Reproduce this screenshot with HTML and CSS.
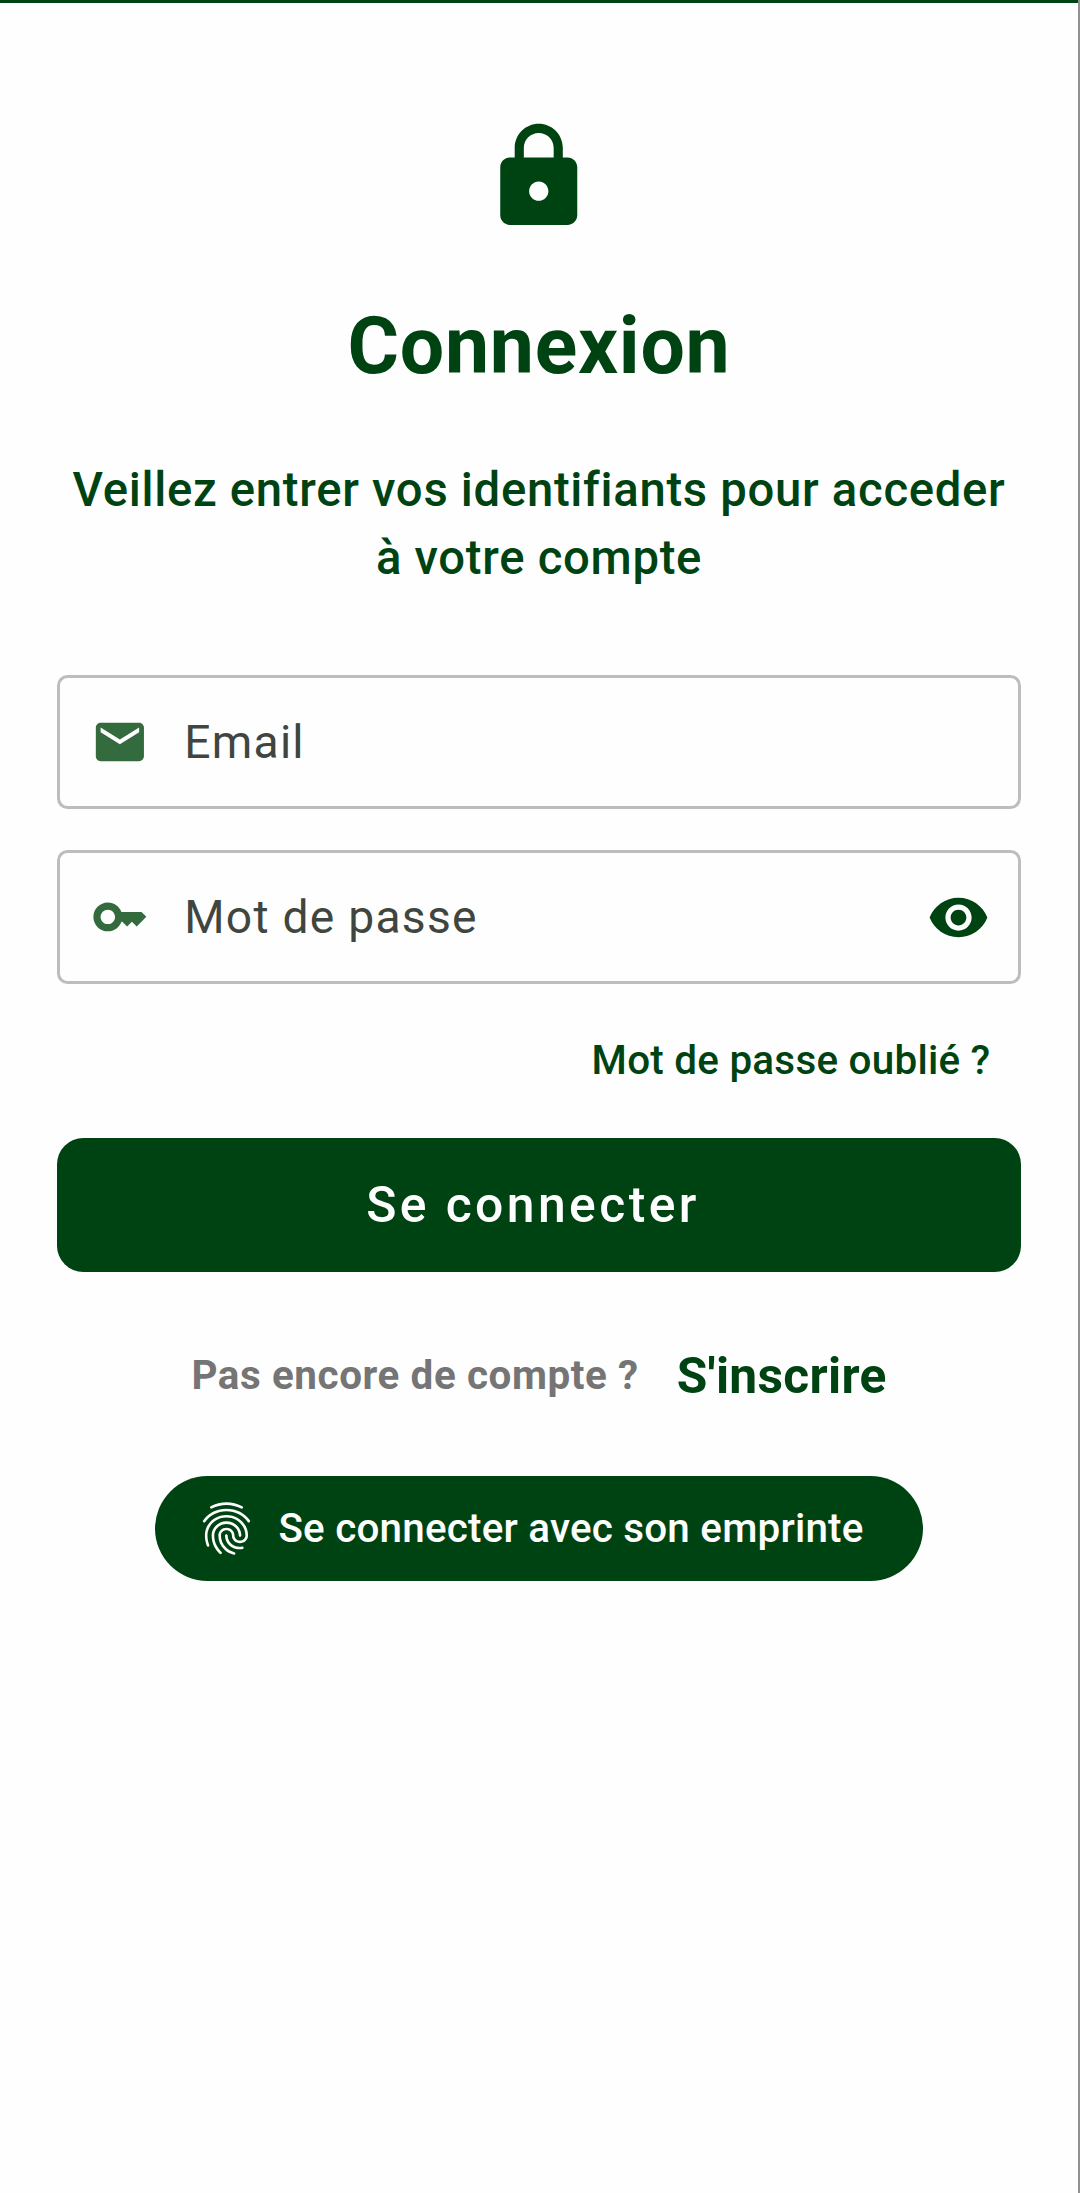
FILE: index.html
```html
<!DOCTYPE html>
<html lang="fr">
<head>
  <meta charset="UTF-8">
  <meta name="viewport" content="width=device-width, initial-scale=1.0">
  <title>Connexion</title>
  <link rel="stylesheet" href="styles.css">
</head>
<body>
  <div class="container">
    <svg class="lock-icon" viewBox="0 0 24 24">
      <path d="M18 8h-1V6c0-2.76-2.24-5-5-5S7 3.24 7 6v2H6c-1.1 0-2 .9-2 2v10c0 1.1.9 2 2 2h12c1.1 0 2-.9 2-2V10c0-1.1-.9-2-2-2zm-6 9c-1.1 0-2-.9-2-2s.9-2 2-2 2 .9 2 2-.9 2-2 2zm3.1-9H8.9V6c0-1.71 1.39-3.1 3.1-3.1 1.71 0 3.1 1.39 3.1 3.1v2z"/>
    </svg>
    <h1>Connexion</h1>
    <p class="subtitle">Veillez entrer vos identifiants pour acceder à votre compte</p>

    <form class="login-form">
      <div class="input-group">
        <svg class="field-icon" viewBox="0 0 24 24">
          <path d="M20 4H4c-1.1 0-1.99.9-1.99 2L2 18c0 1.1.9 2 2 2h16c1.1 0 2-.9 2-2V6c0-1.1-.9-2-2-2zm0 4l-8 5-8-5V6l8 5 8-5v2z"/>
        </svg>
        <input type="email" id="email" placeholder="Email">
      </div>
      <div class="input-group">
        <svg class="field-icon" viewBox="0 0 24 24">
          <path d="M21 10h-8.35C11.83 7.67 9.61 6 7 6c-3.31 0-6 2.69-6 6s2.69 6 6 6c2.61 0 4.83-1.67 5.65-4H13l2 2 2-2 2 2 4-4.04L21 10zM7 15c-1.65 0-3-1.35-3-3s1.35-3 3-3 3 1.35 3 3-1.35 3-3 3z"/>
        </svg>
        <input type="password" id="password" placeholder="Mot de passe">
        <svg class="eye-icon" viewBox="0 0 24 24">
          <path d="M12 4.5C7 4.5 2.73 7.61 1 12c1.73 4.39 6 7.5 11 7.5s9.27-3.11 11-7.5c-1.73-4.39-6-7.5-11-7.5zM12 17c-2.76 0-5-2.24-5-5s2.24-5 5-5 5 2.24 5 5-2.24 5-5 5zm0-8c-1.66 0-3 1.34-3 3s1.34 3 3 3 3-1.34 3-3-1.34-3-3-3z"/>
        </svg>
      </div>
      <a class="forgot">Mot de passe oublié ?</a>
      <button type="button" class="btn">Se connecter</button>
    </form>

    <div class="signup">
      <span class="signup-text">Pas encore de compte ?</span>
      <a class="signup-link">S'inscrire</a>
    </div>

    <button type="button" class="btn-fingerprint">
      <svg class="fingerprint-icon" viewBox="0 0 24 24">
        <path d="M17.81 4.47c-.08 0-.16-.02-.23-.06C15.66 3.42 14 3 12.01 3c-1.98 0-3.86.47-5.57 1.41-.24.13-.54.04-.68-.2-.13-.24-.04-.55.2-.68C7.82 2.52 9.86 2 12.01 2c2.13 0 3.99.47 6.03 1.52.25.13.34.43.21.67-.09.18-.26.28-.44.28zM3.5 9.72c-.1 0-.2-.03-.29-.09-.23-.16-.28-.47-.12-.7.99-1.4 2.25-2.5 3.75-3.27C9.98 4.04 14 4.03 17.15 5.65c1.5.77 2.76 1.86 3.75 3.25.16.22.11.54-.12.7-.23.16-.54.11-.7-.12-.9-1.26-2.04-2.25-3.39-2.94-2.87-1.47-6.54-1.47-9.4.01-1.36.7-2.5 1.7-3.4 2.96-.08.14-.23.21-.39.21zm6.25 12.07c-.13 0-.26-.05-.35-.15-.87-.87-1.34-1.43-2.01-2.64-.69-1.23-1.05-2.73-1.05-4.34 0-2.97 2.54-5.39 5.66-5.39s5.66 2.42 5.66 5.39c0 .28-.22.5-.5.5s-.5-.22-.5-.5c0-2.42-2.09-4.39-4.66-4.39-2.57 0-4.66 1.97-4.66 4.39 0 1.44.32 2.77.93 3.85.64 1.15 1.08 1.64 1.85 2.42.19.2.19.51 0 .71-.11.1-.24.15-.37.15zm7.17-1.85c-1.19 0-2.24-.3-3.1-.89-1.49-1.01-2.38-2.65-2.38-4.39 0-.28.22-.5.5-.5s.5.22.5.5c0 1.41.72 2.74 1.94 3.56.71.48 1.54.71 2.54.71.24 0 .64-.03 1.04-.1.27-.05.53.13.58.41.05.27-.13.53-.41.58-.57.11-1.07.12-1.21.12zM14.91 22c-.04 0-.09-.01-.13-.02-1.59-.44-2.63-1.03-3.72-2.1-1.4-1.39-2.17-3.24-2.17-5.22 0-1.62 1.38-2.94 3.08-2.94 1.7 0 3.08 1.32 3.08 2.94 0 1.07.93 1.94 2.08 1.94s2.08-.87 2.08-1.94c0-3.77-3.25-6.83-7.25-6.83-2.84 0-5.44 1.58-6.61 4.03-.39.81-.59 1.76-.59 2.8 0 .78.07 2.01.67 3.61.1.26-.03.55-.29.64-.26.1-.55-.04-.64-.29-.49-1.31-.73-2.61-.73-3.96 0-1.2.23-2.29.68-3.24 1.33-2.79 4.28-4.6 7.51-4.6 4.55 0 8.25 3.51 8.25 7.83 0 1.62-1.38 2.94-3.08 2.94s-3.08-1.32-3.08-2.94c0-1.07-.93-1.94-2.08-1.94s-2.08.87-2.08 1.94c0 1.71.66 3.31 1.87 4.51.95.94 1.86 1.46 3.27 1.85.27.07.42.35.35.61-.05.23-.26.38-.47.38z"/>
      </svg>
      Se connecter avec son emprinte
    </button>
  </div>
</body>
</html>
```

FILE: styles.css
```css
* {
  box-sizing: border-box;
}
body {
  font-family: Roboto, sans-serif;
  background-color: #fefefe;
  color: #004312;
  margin: 0;
  border-right: 2px solid #919191;
}
.container {
  display: flex;
  flex-direction: column;
  align-items: center;
  min-height: 2193px;
  padding: 115.5px 57px 0;
  border-top: 3px solid #004312;
}
.lock-icon {
  width: 115.5px;
  height: 115.5px;
  fill: #004312;
}
h1 {
  margin: 66px 0 0;
  font-size: 78.75px;
  line-height: 92px;
  font-weight: 700;
  letter-spacing: 0.75px;
}
.subtitle {
  margin: 64px 0 0;
  font-size: 47.25px;
  line-height: 68.25px;
  font-weight: 500;
  letter-spacing: 0.7px;
  text-align: center;
}
.login-form {
  display: flex;
  flex-direction: column;
  width: 100%;
  margin-top: 82px;
}
.input-group {
  display: flex;
  align-items: center;
  height: 134px;
  margin-bottom: 41.5px;
  padding: 0 28.5px 0 31px;
  border: 3px solid #bdbdbd;
  border-radius: 10.5px;
}
.field-icon {
  width: 57.75px;
  height: 57.75px;
  fill: #346b3e;
}
.eye-icon {
  width: 63px;
  height: 63px;
  fill: #004312;
}
.input-group input {
  flex: 1;
  min-width: 0;
  padding: 0;
  margin-left: 35.5px;
  border: none;
  outline: none;
  background: none;
  font-family: inherit;
  font-size: 46.2px;
  letter-spacing: 1.25px;
}
.input-group input::placeholder {
  color: #3f463f;
}
.forgot {
  align-self: flex-end;
  margin: 8.5px 30.5px 0 0;
  font-size: 40.4px;
  line-height: 54px;
  font-weight: 500;
  letter-spacing: 0.24px;
}
.btn {
  height: 134px;
  margin-top: 49.5px;
  padding: 1px 12px 0 0;
  background-color: #004312;
  color: #fefefe;
  border: none;
  border-radius: 26.25px;
  font-family: inherit;
  font-size: 49.875px;
  font-weight: 500;
  letter-spacing: 3.4px;
}
.signup {
  display: flex;
  align-items: center;
  gap: 38px;
  height: 64px;
  margin-top: 72px;
}
.signup-text {
  color: #757575;
  font-size: 40.4px;
  font-weight: 700;
  letter-spacing: 0.58px;
}
.signup-link {
  font-size: 49.7px;
  font-weight: 700;
  letter-spacing: 0.29px;
}
.btn-fingerprint {
  display: flex;
  align-items: center;
  gap: 20px;
  height: 105px;
  margin-top: 68.5px;
  padding: 0 59px 0 40px;
  background-color: #004312;
  color: #fefefe;
  border: none;
  border-radius: 52.5px;
  font-family: inherit;
  font-size: 40.4px;
  font-weight: 500;
  letter-spacing: 0.2px;
}
.fingerprint-icon {
  width: 63px;
  height: 63px;
  fill: #fefefe;
}
```
